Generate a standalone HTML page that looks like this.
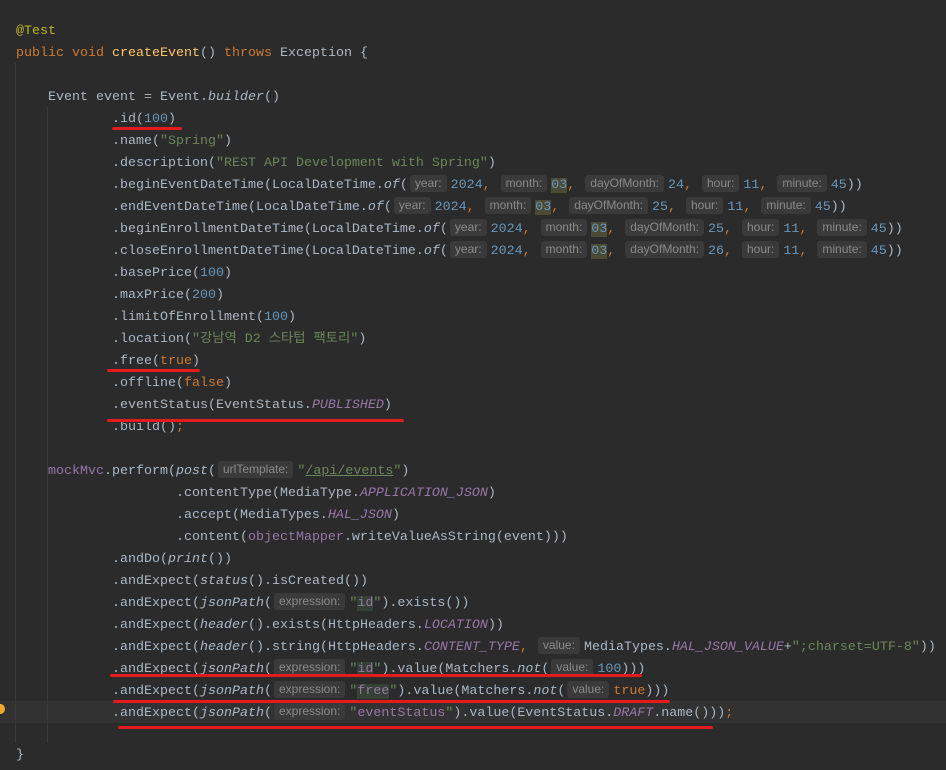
<!DOCTYPE html>
<html><head><meta charset="utf-8"><style>
html,body{margin:0;padding:0;background:#2b2b2b;width:946px;height:770px;overflow:hidden;}
.l{position:absolute;left:16px;margin-top:2px;height:22px;line-height:22px;white-space:pre;font-family:"Liberation Mono","Noto Sans CJK KR",monospace;font-size:13.33px;color:#a9b7c6;}
.k{color:#cc7832}.s{color:#6a8759}.n{color:#6897bb}.c{color:#9876aa;font-style:italic}.i{font-style:italic}.m{color:#ffc66d}.a{color:#bbb529}.f{color:#9876aa}
.h{display:inline-block;font-family:"Liberation Sans",sans-serif;font-size:12px;color:#8a8a8a;background:#3a3a3a;border-radius:3px;padding:0 5px;line-height:17px;margin:0 4px 0 2px;vertical-align:1px;font-style:normal}
.hl{background:#4a4a35}.hs{background:#344134}
.u{position:absolute;height:3px;background:#e31b1b;border-radius:2px}
.g{position:absolute;width:1px;background:#3a3a3a}
</style></head><body>
<div style="position:absolute;left:0;top:701px;width:946px;height:22px;background:#323232"></div>
<div class="g" style="left:15px;top:63px;height:680px"></div>
<div class="g" style="left:47px;top:107px;height:636px"></div>
<div class="l" style="top:19px"><span class="a">@Test</span></div>
<div class="l" style="top:41px"><span class="k">public void </span><span class="m">createEvent</span>() <span class="k">throws </span>Exception {</div>
<div class="l" style="top:85px">    Event event = Event.<span class="i">builder</span>()</div>
<div class="l" style="top:107px">            .id(<span class="n">100</span>)</div>
<div class="l" style="top:129px">            .name(<span class="s">"Spring"</span>)</div>
<div class="l" style="top:151px">            .description(<span class="s">"REST API Development with Spring"</span>)</div>
<div class="l" style="top:173px">            .beginEventDateTime(LocalDateTime.<span class="i">of</span>(<span class="h">year:</span><span class="n">2024</span><span class="k">,</span> <span class="h">month:</span><span class="n hl">03</span><span class="k">,</span> <span class="h">dayOfMonth:</span><span class="n">24</span><span class="k">,</span> <span class="h">hour:</span><span class="n">11</span><span class="k">,</span> <span class="h">minute:</span><span class="n">45</span>))</div>
<div class="l" style="top:195px">            .endEventDateTime(LocalDateTime.<span class="i">of</span>(<span class="h">year:</span><span class="n">2024</span><span class="k">,</span> <span class="h">month:</span><span class="n hl">03</span><span class="k">,</span> <span class="h">dayOfMonth:</span><span class="n">25</span><span class="k">,</span> <span class="h">hour:</span><span class="n">11</span><span class="k">,</span> <span class="h">minute:</span><span class="n">45</span>))</div>
<div class="l" style="top:217px">            .beginEnrollmentDateTime(LocalDateTime.<span class="i">of</span>(<span class="h">year:</span><span class="n">2024</span><span class="k">,</span> <span class="h">month:</span><span class="n hl">03</span><span class="k">,</span> <span class="h">dayOfMonth:</span><span class="n">25</span><span class="k">,</span> <span class="h">hour:</span><span class="n">11</span><span class="k">,</span> <span class="h">minute:</span><span class="n">45</span>))</div>
<div class="l" style="top:239px">            .closeEnrollmentDateTime(LocalDateTime.<span class="i">of</span>(<span class="h">year:</span><span class="n">2024</span><span class="k">,</span> <span class="h">month:</span><span class="n hl">03</span><span class="k">,</span> <span class="h">dayOfMonth:</span><span class="n">26</span><span class="k">,</span> <span class="h">hour:</span><span class="n">11</span><span class="k">,</span> <span class="h">minute:</span><span class="n">45</span>))</div>
<div class="l" style="top:261px">            .basePrice(<span class="n">100</span>)</div>
<div class="l" style="top:283px">            .maxPrice(<span class="n">200</span>)</div>
<div class="l" style="top:305px">            .limitOfEnrollment(<span class="n">100</span>)</div>
<div class="l" style="top:327px">            .location(<span class="s">"강남역 D2 스타텁 팩토리"</span>)</div>
<div class="l" style="top:349px">            .free(<span class="k">true</span>)</div>
<div class="l" style="top:371px">            .offline(<span class="k">false</span>)</div>
<div class="l" style="top:393px">            .eventStatus(EventStatus.<span class="c">PUBLISHED</span>)</div>
<div class="l" style="top:415px">            .build()<span class="k">;</span></div>
<div class="l" style="top:459px">    <span class="f">mockMvc</span>.perform(<span class="i">post</span>(<span class="h">urlTemplate:</span><span class="s">"<u>/api/events</u>"</span>)</div>
<div class="l" style="top:481px">                    .contentType(MediaType.<span class="c">APPLICATION_JSON</span>)</div>
<div class="l" style="top:503px">                    .accept(MediaTypes.<span class="c">HAL_JSON</span>)</div>
<div class="l" style="top:525px">                    .content(<span class="f">objectMapper</span>.writeValueAsString(event)))</div>
<div class="l" style="top:547px">            .andDo(<span class="i">print</span>())</div>
<div class="l" style="top:569px">            .andExpect(<span class="i">status</span>().isCreated())</div>
<div class="l" style="top:591px">            .andExpect(<span class="i">jsonPath</span>(<span class="h">expression:</span><span class="s">"<span class="f hs">id</span>"</span>).exists())</div>
<div class="l" style="top:613px">            .andExpect(<span class="i">header</span>().exists(HttpHeaders.<span class="c">LOCATION</span>))</div>
<div class="l" style="top:635px">            .andExpect(<span class="i">header</span>().string(HttpHeaders.<span class="c">CONTENT_TYPE</span><span class="k">,</span> <span class="h">value:</span>MediaTypes.<span class="c">HAL_JSON_VALUE</span>+<span class="s">";charset=UTF-8"</span>))</div>
<div class="l" style="top:657px">            .andExpect(<span class="i">jsonPath</span>(<span class="h">expression:</span><span class="s">"<span class="f hs">id</span>"</span>).value(Matchers.<span class="i">not</span>(<span class="h">value:</span><span class="n">100</span>)))</div>
<div class="l" style="top:679px">            .andExpect(<span class="i">jsonPath</span>(<span class="h">expression:</span><span class="s">"<span class="f hs">free</span>"</span>).value(Matchers.<span class="i">not</span>(<span class="h">value:</span><span class="k">true</span>)))</div>
<div class="l" style="top:701px">            .andExpect(<span class="i">jsonPath</span>(<span class="h">expression:</span><span class="s">"<span class="f">eventStatus</span>"</span>).value(EventStatus.<span class="c">DRAFT</span>.name()))<span class="k">;</span></div>
<div class="l" style="top:743px">}</div>
<div style="position:absolute;left:-4px;top:704px;width:9px;height:10px;border-radius:50%;background:#f0a732"></div>
<div class="u" style="left:112px;top:127px;width:70px"></div>
<div class="u" style="left:107px;top:369px;width:93px"></div>
<div class="u" style="left:107px;top:419px;width:297px"></div>
<div class="u" style="left:110px;top:674px;width:532px"></div>
<div class="u" style="left:113px;top:700px;width:557px"></div>
<div class="u" style="left:118px;top:726px;width:595px"></div>
</body></html>
